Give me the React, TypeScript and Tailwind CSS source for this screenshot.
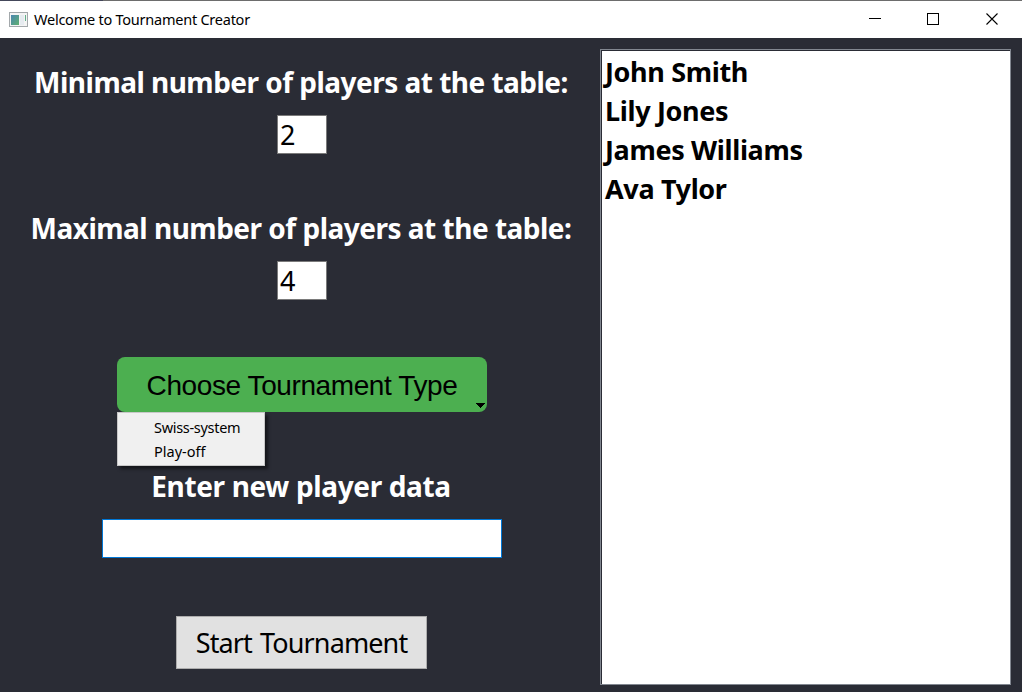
import type { ReactNode } from "react";

const players = ["John Smith", "Lily Jones", "James Williams", "Ava Tylor"];

function AppIcon() {
  return (
    <svg width="20" height="16" viewBox="0 0 20 16" shapeRendering="crispEdges">
      <defs>
        <linearGradient id="pane" x1="0" y1="0" x2="1" y2="1">
          <stop offset="0" stopColor="#4a86b0" />
          <stop offset="1" stopColor="#5fb070" />
        </linearGradient>
      </defs>
      <rect x="0.5" y="0.5" width="18" height="14" fill="#f4f4f4" stroke="#a3a8ab" />
      <rect x="2" y="3" width="8" height="10" fill="url(#pane)" />
      <rect x="11" y="3" width="4" height="10" fill="#e6ebf0" />
      <rect x="16" y="3" width="1" height="6" fill="#62b08a" />
    </svg>
  );
}

function TitleBar() {
  return (
    <header className="flex h-[38px] shrink-0 flex-col bg-white">
      <div className="flex h-px bg-[#6d6d6d]">
        <div className="w-[103px] bg-[#44475a]" />
      </div>
      <div className="flex flex-1 items-center pl-[9px]">
        <AppIcon />
        <span className="mb-px ml-[5px] text-[14.5px] leading-5 tracking-[-0.24px] whitespace-nowrap text-black">
          Welcome to Tournament Creator
        </span>
        <div className="mb-px ml-auto flex pr-[23px]">
          <svg width="130" height="12" viewBox="0 0 130 12" fill="none" stroke="#000">
            <path d="M0 5.5H12" shapeRendering="crispEdges" />
            <rect x="58.5" y="0.5" width="11" height="11" shapeRendering="crispEdges" />
            <path d="M117.5 0.5L128.5 11.5M128.5 0.5L117.5 11.5" strokeWidth="1.1" />
          </svg>
        </div>
      </div>
    </header>
  );
}

function Label({ children }: { children: ReactNode }) {
  return <h2 className="mr-0.5 h-10 text-[28px] leading-[42px] font-bold whitespace-nowrap text-white">{children}</h2>;
}

function NumberField({ value }: { value: string }) {
  return (
    <div className="mt-[14px] h-[39px] w-[50px] border border-[#7a7a7a] bg-white pl-0.5 text-[27px] leading-[37px] text-black">
      {value}
    </div>
  );
}

export default function App() {
  return (
    <div className="flex h-[692px] w-[1022px] flex-col overflow-hidden bg-[#2a2c35] font-['Noto_Sans',sans-serif]">
      <TitleBar />
      <main className="flex flex-1 pt-[11px] pr-[11px] pb-[7px]">
        <section className="flex w-[600px] flex-col items-center pt-3 pl-1">
          <Label>
            <span className="tracking-[-0.52px]">Minimal number of players at the table:</span>
          </Label>
          <NumberField value="2" />
          <div className="h-[53px]" />
          <Label>
            <span className="tracking-[-0.5px]">Maximal number of players at the table:</span>
          </Label>
          <NumberField value="4" />
          <div className="relative mt-[57px]">
            <button className="relative block h-[55px] w-[370px] rounded-[8px] bg-[#4caf50] pt-px font-['Liberation_Sans',sans-serif] text-[28px] leading-[56px] tracking-[-0.4px] text-black">
              Choose Tournament Type
              <svg className="absolute right-[2px] bottom-[4px]" width="9" height="5" viewBox="0 0 9 5" shapeRendering="crispEdges">
                <path d="M0 0H9L4.5 5Z" fill="#000" />
              </svg>
            </button>
            <div className="absolute top-[55px] left-0 z-10 flex h-[54px] w-[148px] flex-col border border-[#c8c8c8] bg-[#f0f0f0] pt-[2px] pl-9 text-[14.5px] leading-6 text-black shadow-[3px_3px_3px_rgba(0,0,0,0.5)]">
              <span className="tracking-[-0.3px]">Swiss-system</span>
              <span>Play-off</span>
            </div>
          </div>
          <div className="h-[53px]" />
          <Label>
            <span className="tracking-[-0.35px]">Enter new player data</span>
          </Label>
          <div className="mt-[14px] h-[39px] w-[400px] border border-[#0078d7] bg-white" />
          <button className="mt-[58px] mr-px h-[53px] w-[251px] border border-[#adadad] bg-[#e1e1e1] text-[27px] leading-[52px] tracking-[-0.88px] [word-spacing:2px] whitespace-nowrap text-black">
            Start Tournament
          </button>
        </section>
        <section className="flex-1 border border-[#828790]">
          <ul className="h-full border-t border-l border-[#2a2c35] bg-white pt-px pl-[3px] text-[27px] leading-[39px] font-bold tracking-[-0.35px] text-black">
            {players.map((name) => (
              <li key={name} className="whitespace-nowrap">{name}</li>
            ))}
          </ul>
        </section>
      </main>
    </div>
  );
}
